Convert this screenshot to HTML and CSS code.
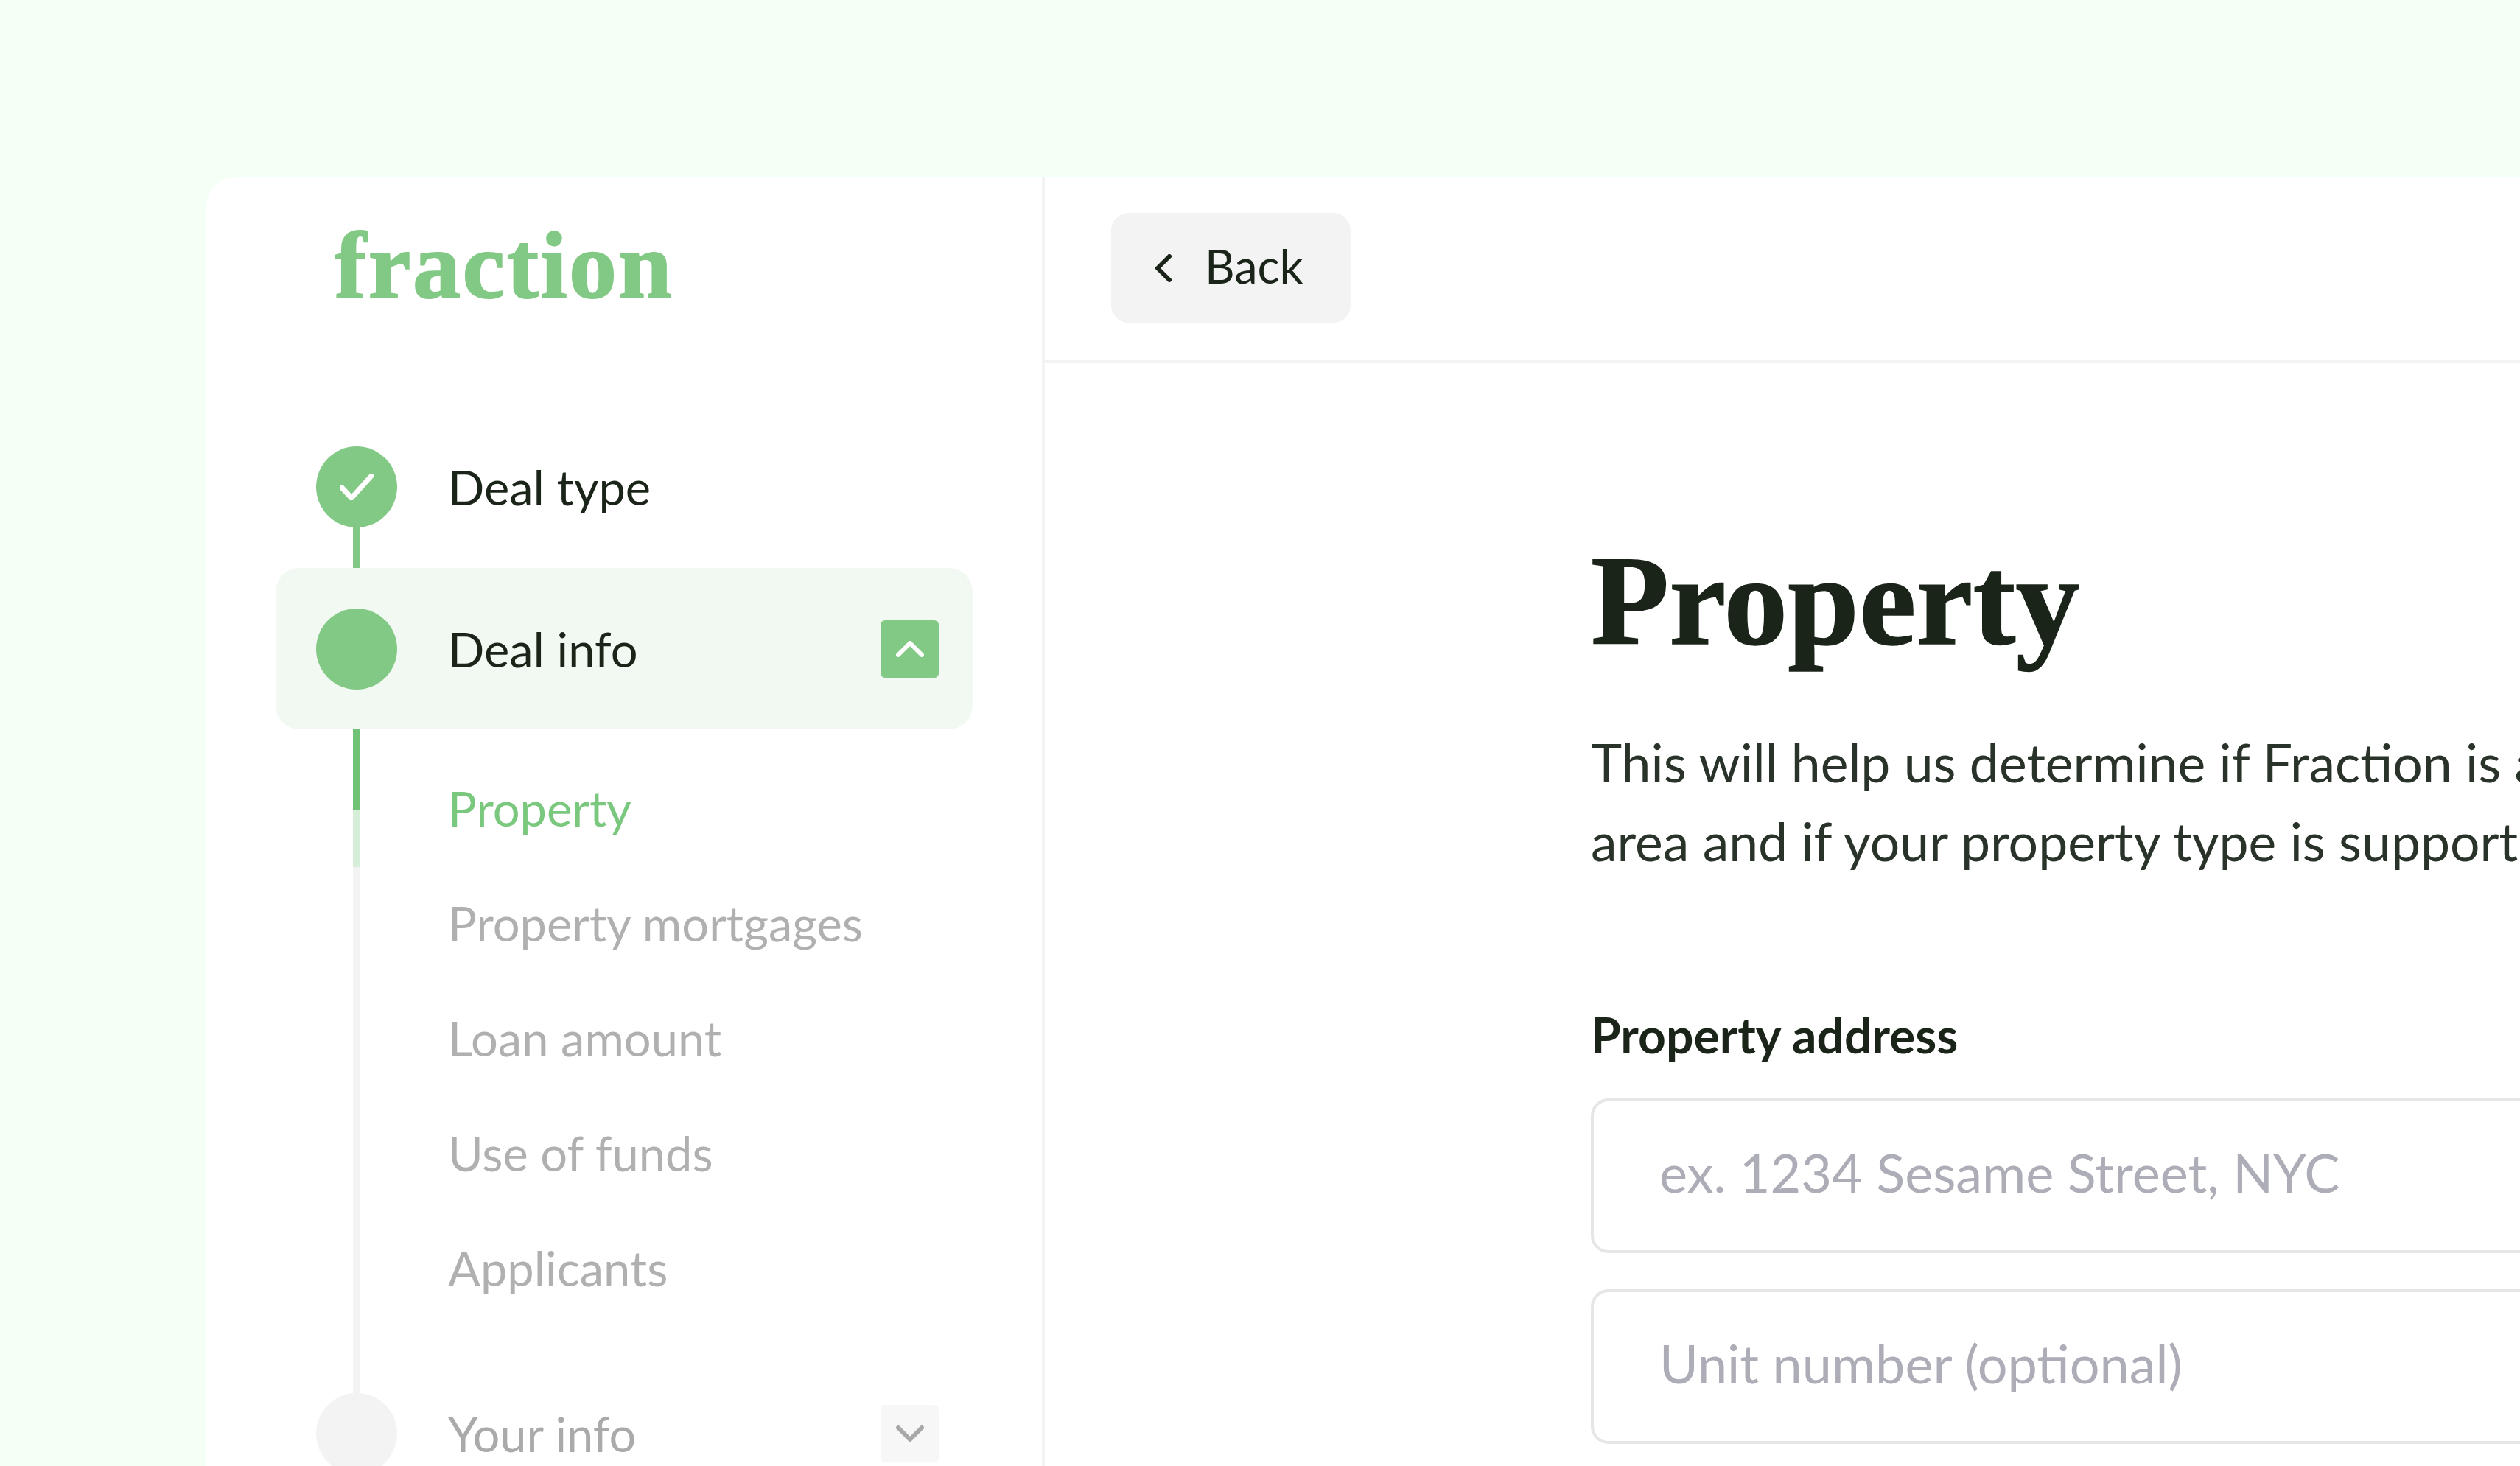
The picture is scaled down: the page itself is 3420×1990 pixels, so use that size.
FILE: index.html
```html
<!DOCTYPE html>
<html lang="en">
<head>
    <meta charset="UTF-8">
    <meta name="viewport" content="width=device-width, initial-scale=1.0">
    <title>Fraction - Property</title>
    <link rel="stylesheet" href="styles.css">
</head>
<body>

    <div class="card">
        <aside class="sidebar">
            <div class="logo">fraction</div>

            <div class="steps">
                <div class="step">
                    <span class="dot dot-done">
                        <svg class="check" viewBox="0 0 46 36"><path d="M3 19 L16 33 L43 3"/></svg>
                    </span>
                    <span class="step-name">Deal type</span>
                </div>
                <div class="link"></div>
                <div class="step step-open">
                    <span class="dot dot-done"></span>
                    <span class="step-name">Deal info</span>
                    <span class="toggle toggle-on">
                        <svg class="chev" viewBox="0 0 38 22"><path d="M3 19 L19 3 L35 19"/></svg>
                    </span>
                </div>
                <div class="sub">
                    <div class="rail">
                        <div class="rail-done"></div>
                        <div class="rail-part"></div>
                        <div class="rail-rest"></div>
                    </div>
                    <ul class="sub-list">
                        <li class="sub-active">Property</li>
                        <li>Property mortgages</li>
                        <li>Loan amount</li>
                        <li>Use of funds</li>
                        <li>Applicants</li>
                    </ul>
                </div>
                <div class="step step-todo">
                    <span class="dot"></span>
                    <span class="step-name">Your info</span>
                    <span class="toggle">
                        <svg class="chev" viewBox="0 0 38 22"><path d="M3 3 L19 19 L35 3"/></svg>
                    </span>
                </div>
            </div>
        </aside>

        <main class="main">
            <header class="topbar">
                <button class="back" type="button">
                    <svg class="back-icon" viewBox="0 0 22 38"><path d="M19 3 L3 19 L19 35"/></svg>
                    <span class="back-text">Back</span>
                </button>
            </header>

            <section class="content">
                <h1>Property</h1>
                <p class="intro">This will help us determine if Fraction is available in your<br>area and if your property type is supported.</p>

                <label class="field-label" for="address">Property address</label>
                <input class="field" id="address" type="text" placeholder="ex. 1234 Sesame Street, NYC">
                <input class="field" id="unit" type="text" placeholder="Unit number (optional)">
            </section>
        </main>
    </div>

</body>
</html>
```

FILE: styles.css
```css
html, body {
    height: 1990px;
    overflow: hidden;
}
body {
    margin: 0;
    padding: 240px 0 0 280px;
    box-sizing: border-box;
    background-color: #f4fff6;
    font-family: Lato, "Open Sans", sans-serif;
    color: #1a2419;
}
.card {
    display: flex;
    height: 1750px;
    background-color: white;
    border-top-left-radius: 40px;
}

/* sidebar */
.sidebar {
    width: 1134px;
    flex-shrink: 0;
    border-right: 4px solid #f3f3f3;
}
.logo {
    margin: 55px 0 0 174px;
    height: 127px;
    font-family: "Liberation Serif", serif;
    font-weight: bold;
    font-size: 130px;
    line-height: 130px;
    letter-spacing: 2.5px;
    -webkit-text-stroke: 2px #82c985;
    color: #82c985;
}
.steps {
    width: 946px;
    margin: 184px 0 0 94px;
}
.step {
    display: flex;
    align-items: center;
    padding: 0 46px 0 55px;
}
.step-open {
    height: 219px;
    background-color: #f2f9f3;
    border-radius: 32px;
}
.dot {
    display: flex;
    align-items: center;
    justify-content: center;
    width: 110px;
    height: 110px;
    flex-shrink: 0;
    border-radius: 50%;
    background-color: #f3f3f3;
}
.dot-done {
    background-color: #82c985;
}
.check {
    width: 46px;
    height: 36px;
    fill: none;
    stroke: white;
    stroke-width: 7;
    stroke-linecap: round;
    stroke-linejoin: round;
}
.step-name {
    margin-left: 69px;
    font-size: 65px;
}
.step-todo .step-name {
    color: #aaaaaa;
}
.toggle {
    display: flex;
    align-items: center;
    justify-content: center;
    width: 79px;
    height: 78px;
    margin-left: auto;
    border-radius: 6px;
    background-color: #f7f7f7;
}
.toggle-on {
    background-color: #82c985;
}
.chev {
    width: 38px;
    height: 22px;
    fill: none;
    stroke: #a8a8a8;
    stroke-width: 6;
    stroke-linecap: round;
    stroke-linejoin: round;
}
.toggle-on .chev {
    stroke: white;
}
.link {
    width: 9px;
    height: 55px;
    margin-left: 105px;
    background-color: #82c985;
}
.sub {
    display: flex;
    height: 901px;
}
.rail {
    display: flex;
    flex-direction: column;
    width: 9px;
    margin-left: 105px;
}
.rail-done {
    height: 110px;
    background-color: #70c274;
}
.rail-part {
    height: 77px;
    background-color: #d6eed7;
}
.rail-rest {
    flex: 1;
    background-color: #f3f3f3;
}
.sub-list {
    list-style: none;
    margin: 29px 0 0 120px;
    padding: 0;
    font-size: 65px;
    color: #b0b0b0;
}
.sub-list li {
    height: 156px;
    line-height: 156px;
}
.sub-list .sub-active {
    color: #7ac77e;
}

/* main */
.main {
    flex: 1;
    min-width: 0;
    overflow: hidden;
}
.topbar {
    height: 253px;
    padding: 49px 0 0 90px;
    box-sizing: border-box;
    border-bottom: 4px solid #f3f3f3;
}
.back {
    display: flex;
    align-items: center;
    width: 325px;
    height: 149px;
    padding: 0 0 0 60px;
    border: none;
    border-radius: 24px;
    background-color: #f3f3f3;
    font-family: inherit;
    font-size: 63px;
    color: #1a2419;
    cursor: pointer;
}
.back-icon {
    width: 22px;
    height: 38px;
    margin-right: 45px;
    fill: none;
    stroke: #1a2419;
    stroke-width: 6;
    stroke-linecap: round;
    stroke-linejoin: round;
}
.back-text {
    margin-bottom: 6px;
}
.content {
    padding: 223px 0 0 741px;
}
h1 {
    margin: 0;
    font-family: "Liberation Serif", serif;
    font-weight: bold;
    font-size: 174px;
    line-height: 200px;
    -webkit-text-stroke: 1.5px #1a2419;
}
.intro {
    margin: 65px 0 0;
    white-space: nowrap;
    font-size: 71.5px;
    line-height: 107px;
    color: #2a332a;
}
.field-label {
    display: block;
    margin: 170px 0 46px;
    font-weight: bold;
    font-size: 66px;
    line-height: 80px;
}
.field {
    display: block;
    width: 1400px;
    height: 210px;
    box-sizing: border-box;
    margin: 0 0 49px;
    padding: 0 0 10px 89px;
    border: 4px solid #e6e6e6;
    border-radius: 24px;
    background: white;
    font-family: inherit;
    font-size: 72px;
}
.field::placeholder {
    color: #adadb8;
    opacity: 1;
}
```
